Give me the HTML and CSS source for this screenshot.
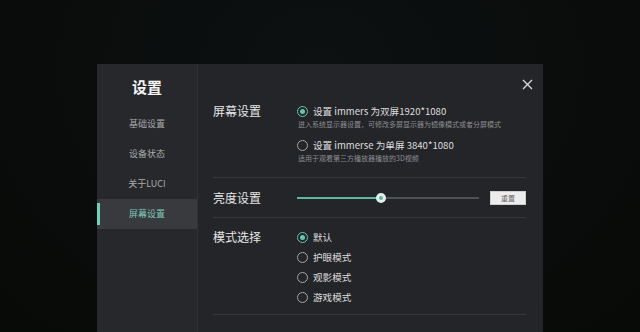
FILE: index.html
```html
<!DOCTYPE html>
<html lang="zh">
<head>
<meta charset="utf-8">
<link rel="stylesheet" href="styles.css">
</head>
<body>
<div class="dialog">
  <aside class="sidebar">
    <div class="title">设置</div>
    <div class="menu-item">基础设置</div>
    <div class="menu-item">设备状态</div>
    <div class="menu-item">关于LUCI</div>
    <div class="menu-item active">屏幕设置</div>
  </aside>
  <main class="main">
    <button class="close" aria-label="关闭">
      <svg width="11" height="11" viewBox="0 0 11 11"><path d="M1 1L10 10M10 1L1 10" stroke="#d8d8d8" stroke-width="1.4" fill="none"/></svg>
    </button>
    <section class="section s1">
      <div class="label">屏幕设置</div>
      <div class="options">
        <div class="radio-row"><span class="radio checked"></span><span class="rtext">设置 immers 为双屏1920*1080</span></div>
        <div class="sub">进入系统显示器设置，可修改多屏显示器为镜像模式或者分屏模式</div>
        <div class="radio-row r2"><span class="radio"></span><span class="rtext">设置 immerse 为单屏 3840*1080</span></div>
        <div class="sub">适用于观看第三方播放器播放的3D视频</div>
      </div>
    </section>
    <section class="section s2">
      <div class="label">亮度设置</div>
      <div class="slider">
        <div class="fill" style="width:46%"></div>
        <div class="thumb" style="left:46%"></div>
      </div>
      <button class="reset">重置</button>
    </section>
    <section class="section s3">
      <div class="label">模式选择</div>
      <div class="options modes">
        <div class="radio-row"><span class="radio checked"></span><span class="rtext">默认</span></div>
        <div class="radio-row"><span class="radio"></span><span class="rtext">护眼模式</span></div>
        <div class="radio-row"><span class="radio"></span><span class="rtext">观影模式</span></div>
        <div class="radio-row"><span class="radio"></span><span class="rtext">游戏模式</span></div>
      </div>
    </section>
  </main>
</div>
</body>
</html>
```
FILE: styles.css
```css
html, body {
  margin: 0;
  padding: 0;
  height: 332px;
  overflow: hidden;
}
body {
  background: radial-gradient(ellipse at 50% 20%, #0d1112 0%, #0a0c0b 60%, #080a08 100%);
  font-family: "Noto Sans CJK SC", "Noto Sans", sans-serif;
  padding: 64px 0 0 97px;
  box-sizing: border-box;
}
.dialog {
  display: flex;
  width: 446px;
  height: 268px;
  background: #242529;
}
.sidebar {
  width: 100px;
  background: #27282c;
  border-right: 1px solid #313236;
  padding-top: 12px;
  box-sizing: content-box;
}
.title {
  height: 22px;
  line-height: 22px;
  text-align: center;
  color: #f4f4f4;
  font-size: 15px;
  font-weight: bold;
  margin-bottom: 11px;
}
.menu-item {
  position: relative;
  height: 30px;
  line-height: 30px;
  text-align: center;
  font-size: 9px;
  color: #a9aaab;
}
.menu-item.active {
  background: #393a3e;
  color: #7fc7b5;
}
.menu-item.active::before {
  content: "";
  position: absolute;
  left: 0;
  top: 4px;
  width: 3px;
  height: 22px;
  background: #6fd0b8;
}
.main {
  position: relative;
  flex: 1;
  padding: 0 17px 0 15px;
}
.close {
  position: absolute;
  top: 15px;
  right: 10px;
  width: 11px;
  height: 11px;
  padding: 0;
  border: 0;
  background: none;
  display: block;
}
.close svg { display: block; }
.section {
  display: flex;
  align-items: flex-start;
  border-bottom: 1px solid #36373b;
}
.label {
  width: 84px;
  flex: none;
  height: 14px;
  line-height: 14px;
  font-size: 12px;
  color: #e6e6e6;
}
.s1 { padding: 40px 0 14px; }
.options { display: flex; flex-direction: column; }
.radio-row {
  display: flex;
  align-items: center;
  height: 14px;
}
.radio {
  width: 11px;
  height: 11px;
  box-sizing: border-box;
  border: 1px solid #a4a5a7;
  border-radius: 50%;
  margin-right: 5px;
  flex: none;
  position: relative;
}
.radio.checked {
  border: 1.5px solid #66c6ae;
}
.radio.checked::after {
  content: "";
  position: absolute;
  left: 50%;
  top: 50%;
  width: 5px;
  height: 5px;
  margin: -2.5px 0 0 -2.5px;
  border-radius: 50%;
  background: #66c6ae;
}
.rtext {
  font-size: 9.6px;
  color: #dedede;
  line-height: 14px;
  white-space: nowrap;
}
.sub {
  font-size: 7px;
  line-height: 10px;
  height: 10px;
  margin-top: 1px;
  padding-left: 1px;
  color: #8c8d8f;
  white-space: nowrap;
}
.r2 { margin-top: 9px; }
.s2 {
  padding: 13px 0 12px;
  align-items: center;
}
.slider {
  position: relative;
  width: 182px;
  height: 2px;
  background: #505155;
}
.fill {
  position: absolute;
  left: 0;
  top: 0;
  height: 2px;
  background: #5cb8a3;
}
.thumb {
  position: absolute;
  top: 50%;
  width: 10px;
  height: 10px;
  margin: -5px 0 0 -5px;
  border-radius: 50%;
  background: #e4efec;
  box-sizing: border-box;
  border: 3px solid #e4efec;
}
.thumb::after {
  content: "";
  display: block;
  width: 4px;
  height: 4px;
  border-radius: 50%;
  background: #5cb8a3;
}
.reset {
  margin-left: auto;
  width: 36px;
  height: 14px;
  padding: 0;
  border: 1px solid #cfcfcf;
  background: #ececec;
  font-family: inherit;
  font-size: 7px;
  color: #666;
  line-height: 12px;
}
.s3 { padding: 12px 0 10px; }
.modes { gap: 6px; }
```
